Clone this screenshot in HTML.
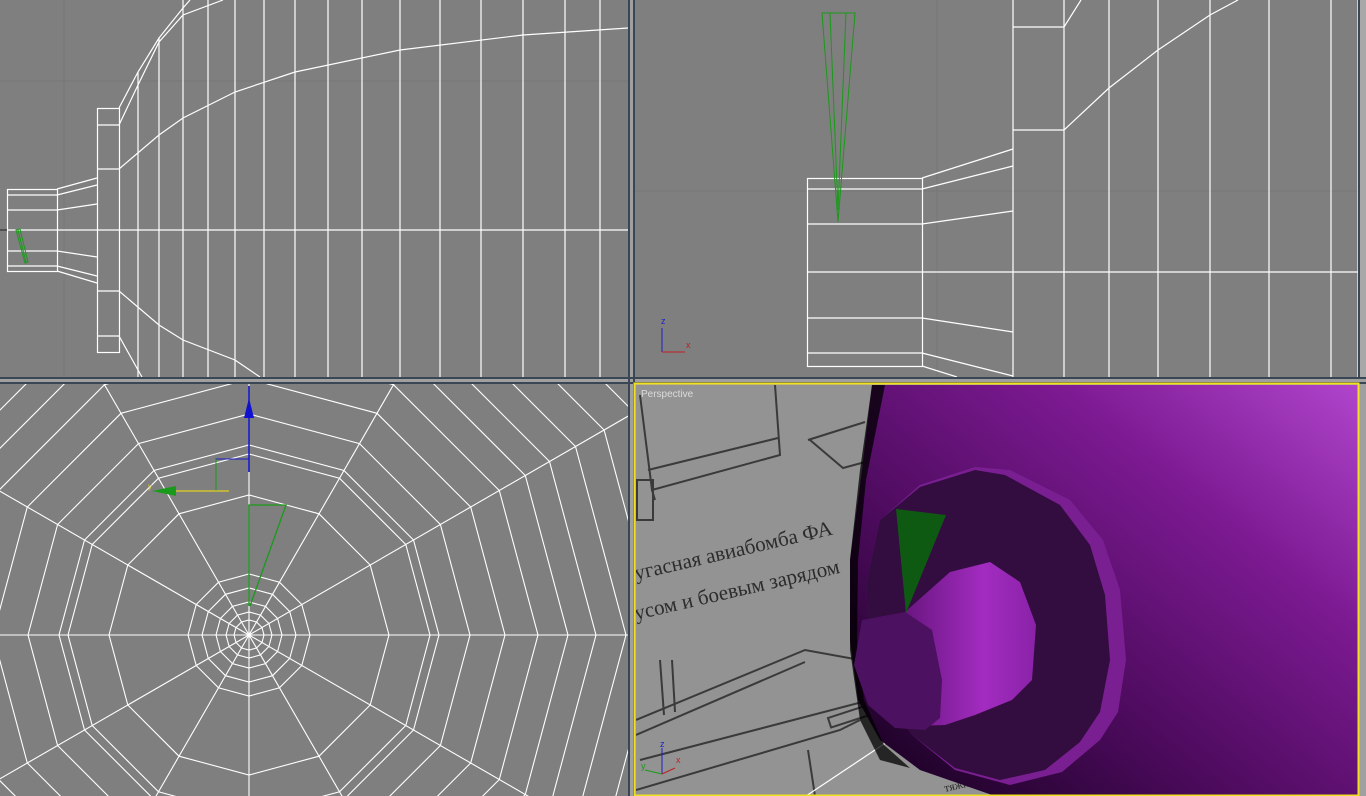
<!DOCTYPE html>
<html><head><meta charset="utf-8"><style>
html,body{margin:0;padding:0;width:1366px;height:796px;overflow:hidden;background:#a3a3a3}
svg{display:block;position:absolute;left:0;top:0}
</style></head><body>
<svg width="1366" height="796" xmlns="http://www.w3.org/2000/svg">
<defs>
<linearGradient id="body" x1="0" y1="1" x2="1" y2="0">
<stop offset="0" stop-color="#12001a"/><stop offset="0.35" stop-color="#4a0a5a"/><stop offset="0.7" stop-color="#7c1a92"/><stop offset="1" stop-color="#b045cc"/>
</linearGradient>
<linearGradient id="cyl" x1="0" y1="0" x2="1" y2="0">
<stop offset="0" stop-color="#6a1680"/><stop offset="0.6" stop-color="#a22cc0"/><stop offset="1" stop-color="#8a22a8"/>
</linearGradient>
<clipPath id="tl"><rect x="0" y="0" width="628" height="377"/></clipPath>
<clipPath id="tr"><rect x="635" y="0" width="723" height="377"/></clipPath>
<clipPath id="bl"><rect x="0" y="384" width="628" height="412"/></clipPath>
<clipPath id="br"><rect x="636" y="385" width="723" height="411"/></clipPath>
</defs>
<rect x="0" y="0" width="1366" height="796" fill="#a0a0a0"/>
<rect x="628" y="0" width="2" height="796" fill="#3b4654"/>
<rect x="633" y="0" width="2" height="796" fill="#3b4654"/>
<rect x="0" y="377" width="1366" height="2" fill="#3b4654"/>
<rect x="0" y="382" width="1366" height="2" fill="#3b4654"/>

<g clip-path="url(#tl)">
<rect x="0" y="0" width="628" height="377" fill="#7f7f7f"/>
<line x1="64" y1="0" x2="64" y2="377" stroke="#777" /><line x1="0" y1="81" x2="628" y2="81" stroke="#777"/>
<g stroke="#fff" stroke-width="1.2" fill="none">
<line x1="0" y1="230" x2="628" y2="230"/>
<rect x="7.5" y="189.5" width="50" height="82"/>
<line x1="7" y1="195" x2="57" y2="195"/><line x1="7" y1="210" x2="57" y2="210"/><line x1="7" y1="251" x2="57" y2="251"/><line x1="7" y1="266" x2="57" y2="266"/>
<rect x="97.5" y="108.5" width="22" height="244"/>
<line x1="97" y1="125" x2="119" y2="125"/><line x1="97" y1="169" x2="119" y2="169"/><line x1="97" y1="291" x2="119" y2="291"/><line x1="97" y1="336" x2="119" y2="336"/>
<line x1="57" y1="189" x2="97" y2="178"/><line x1="57" y1="195" x2="97" y2="185"/><line x1="57" y1="210" x2="97" y2="204"/>
<line x1="57" y1="251" x2="97" y2="257"/><line x1="57" y1="266" x2="97" y2="276"/><line x1="57" y1="271" x2="97" y2="283"/>
<line x1="138" y1="72" x2="138" y2="377"/><line x1="159" y1="38" x2="159" y2="377"/><line x1="183" y1="0" x2="183" y2="377"/>
<line x1="208" y1="0" x2="208" y2="377"/><line x1="235" y1="0" x2="235" y2="377"/><line x1="264" y1="0" x2="264" y2="377"/><line x1="295" y1="0" x2="295" y2="377"/>
<line x1="328" y1="0" x2="328" y2="377"/><line x1="362" y1="0" x2="362" y2="377"/><line x1="400" y1="0" x2="400" y2="377"/><line x1="440" y1="0" x2="440" y2="377"/>
<line x1="481" y1="0" x2="481" y2="377"/><line x1="523" y1="0" x2="523" y2="377"/><line x1="565" y1="0" x2="565" y2="377"/><line x1="600" y1="0" x2="600" y2="377"/>
<polyline points="119,108 138,72 159,38 183,8 190,0"/>
<polyline points="119,125 138,85 159,42 183,15 223,0"/>
<polyline points="119,169 159,135 183,118 235,92 295,72 400,50 523,35 628,28"/>
<polyline points="119,291 159,325 183,340 235,360 260,377"/>
<polyline points="119,336 138,370 142,377"/>
</g>
<g stroke="#1a9a1a" fill="none" stroke-width="1"><polygon points="16,230 20,229 28,262 25,263"/><line x1="18" y1="230" x2="26" y2="262"/></g>
<line x1="0" y1="230" x2="7" y2="230" stroke="#000"/>
</g>

<g clip-path="url(#tr)">
<rect x="635" y="0" width="725" height="377" fill="#7f7f7f"/>
<line x1="937" y1="0" x2="937" y2="377" stroke="#777"/><line x1="635" y1="191" x2="1360" y2="191" stroke="#777"/>
<g stroke="#fff" stroke-width="1.2" fill="none">
<rect x="807.5" y="178.5" width="115" height="188"/>
<line x1="807" y1="189" x2="922" y2="189"/><line x1="807" y1="224" x2="922" y2="224"/><line x1="807" y1="272" x2="1358" y2="272"/><line x1="807" y1="318" x2="922" y2="318"/><line x1="807" y1="353" x2="922" y2="353"/>
<line x1="1013" y1="0" x2="1013" y2="377"/><line x1="1064" y1="0" x2="1064" y2="377"/><line x1="1109" y1="0" x2="1109" y2="377"/><line x1="1158" y1="0" x2="1158" y2="377"/><line x1="1210" y1="0" x2="1210" y2="377"/><line x1="1269" y1="0" x2="1269" y2="377"/><line x1="1331" y1="0" x2="1331" y2="377"/><line x1="1358" y1="0" x2="1358" y2="377"/>
<line x1="1013" y1="27" x2="1064" y2="27"/><line x1="1013" y1="130" x2="1064" y2="130"/>
<line x1="922" y1="178" x2="1013" y2="149"/><line x1="922" y1="189" x2="1013" y2="166"/><line x1="922" y1="224" x2="1013" y2="211"/><line x1="922" y1="318" x2="1013" y2="332"/><line x1="922" y1="353" x2="1013" y2="376"/><line x1="922" y1="366" x2="957" y2="377"/>
<polyline points="1064,130 1109,88 1158,50 1210,15 1238,0"/>
<polyline points="1064,27 1081,0"/>
</g>
<g stroke="#1a9a1a" fill="none" stroke-width="1"><polygon points="822,13 855,13 838,222"/><line x1="830" y1="13" x2="838" y2="210"/><line x1="846" y1="13" x2="838" y2="210"/></g>
<line x1="662" y1="328" x2="662" y2="352" stroke="#2020c0"/><line x1="662" y1="352" x2="685" y2="352" stroke="#c02020"/>
<text x="661" y="324" font-family="Liberation Sans, sans-serif" font-size="9" fill="#2020c0">z</text>
<text x="686" y="348" font-family="Liberation Sans, sans-serif" font-size="9" fill="#c02020">x</text>
</g>
<rect x="1359" y="0" width="7" height="377" fill="#a8a8a8"/>
<rect x="1358" y="0" width="2" height="377" fill="#3b4654"/>

<g clip-path="url(#bl)">
<rect x="0" y="384" width="628" height="412" fill="#7f7f7f"/>
<g id="web" stroke="#fff" stroke-width="1.1" fill="none"></g>
<line x1="249" y1="386" x2="249" y2="472" stroke="#1010d0" stroke-width="1.5"/>
<polygon points="249,398 244,418 254,418" fill="#1010d0"/>
<polyline points="216,491 216,459 249,459" stroke="#1818c0" fill="none"/>
<line x1="216" y1="459" x2="216" y2="491" stroke="#1a9a1a"/>
<line x1="155" y1="491" x2="229" y2="491" stroke="#e0d020" stroke-width="1.2"/>
<polygon points="152,491 176,486 176,496" fill="#1a9a1a"/>
<text x="148" y="489" font-family="Liberation Sans, sans-serif" font-size="8" fill="#e0d020">y</text>
<polyline points="249,606 249,505 286,505 250,606" stroke="#1a9a1a" fill="none" stroke-width="1.3"/>
</g>

<g clip-path="url(#br)">
<rect x="636" y="385" width="723" height="411" fill="#939393"/>
<g stroke="#3a3a3a" fill="none" stroke-width="2">
<polyline points="640,395 652,490 780,455 775,385"/>
<polyline points="648,470 778,438"/>
<polyline points="652,490 655,500"/>
<polyline points="808,440 865,422"/>
<polyline points="810,440 843,468 880,458"/>
<rect x="637" y="480" width="16" height="40"/>
<polyline points="636,720 805,650 860,660"/>
<polyline points="636,735 805,662"/>
<polyline points="640,760 870,700"/>
<polyline points="636,790 840,730 860,720"/>
<rect x="828" y="718" width="50" height="10" transform="rotate(-18 828 718)"/>
<polyline points="660,660 664,715"/><polyline points="672,660 675,712"/>
<polyline points="808,750 815,796"/>
</g>
<g font-family="Liberation Serif, 'Noto Serif CJK SC', serif" fill="#2c2c2c" font-size="21">
<text x="636" y="580" transform="rotate(-13 636 580)">угасная  авиабомба  ФА</text>
<text x="636" y="620" transform="rotate(-13 636 620)">усом и боевым зарядом</text>
<text x="945" y="792" font-size="12" transform="rotate(-13 945 792)">тяжи</text>
</g>
<line x1="806" y1="796" x2="905" y2="730" stroke="#fff" stroke-width="1.2"/>
<polygon points="872,385 1360,385 1360,796 995,796 920,770 880,740 858,700 850,640 850,560 862,470" fill="url(#body)"/>
<polygon points="872,385 885,385 866,480 858,560 857,650 864,700 884,745 910,768 880,760 860,720 850,650 850,560 860,470" fill="#000" opacity="0.75"/>
<polygon points="975,467 1010,470 1070,500 1103,540 1120,590 1126,660 1118,712 1100,740 1062,772 1010,785 955,770 912,735 888,700 870,650 866,585 880,520 920,485" fill="#7a1f92"/>
<polygon points="975,470 1005,475 1060,505 1090,545 1105,595 1110,660 1100,712 1080,742 1045,770 1000,780 955,768 912,735 888,700 870,650 866,585 880,520 920,487" fill="#330c40"/>
<polygon points="905,612 950,572 990,562 1020,582 1036,625 1032,680 1012,700 975,715 945,725 915,726" fill="url(#cyl)"/>
<polygon points="862,620 905,612 932,630 942,680 940,718 925,730 895,728 868,705 854,665" fill="#4c1160"/>
<polygon points="896,509 946,515 906,613" fill="#0f5a12"/>
<text x="641" y="397" font-family="Liberation Sans, sans-serif" font-size="10" fill="#dcdcdc">Perspective</text>
<line x1="662" y1="748" x2="662" y2="774" stroke="#2020c0"/>
<line x1="662" y1="774" x2="675" y2="768" stroke="#c02020"/>
<line x1="662" y1="774" x2="645" y2="770" stroke="#1a9a1a"/>
<text x="660" y="747" font-family="Liberation Sans, sans-serif" font-size="9" fill="#2020c0">z</text>
<text x="676" y="763" font-family="Liberation Sans, sans-serif" font-size="9" fill="#c02020">x</text>
<text x="641" y="769" font-family="Liberation Sans, sans-serif" font-size="9" fill="#1a9a1a">y</text>
</g>
<rect x="634.5" y="383.5" width="724" height="412" fill="none" stroke="#f0e020" stroke-width="2"/>
</svg>
<script>
(function(){
var g=document.getElementById('web'),cx=249,cy=635;
var R=[15,23,33,47,61,140,181,190,221,256,289,319,347,377,410,445,480];
var s='';
R.forEach(function(r){var p=[];for(var i=0;i<12;i++){var a=i*Math.PI/6;p.push((cx+r*Math.cos(a)).toFixed(1)+','+(cy+r*Math.sin(a)).toFixed(1));}s+='<polygon points="'+p.join(' ')+'"/>';});
for(var i=0;i<12;i++){var a=i*Math.PI/6;s+='<line x1="'+cx+'" y1="'+cy+'" x2="'+(cx+900*Math.cos(a)).toFixed(1)+'" y2="'+(cy+900*Math.sin(a)).toFixed(1)+'"/>';}
g.innerHTML=s;
})();
</script>
</body></html>
